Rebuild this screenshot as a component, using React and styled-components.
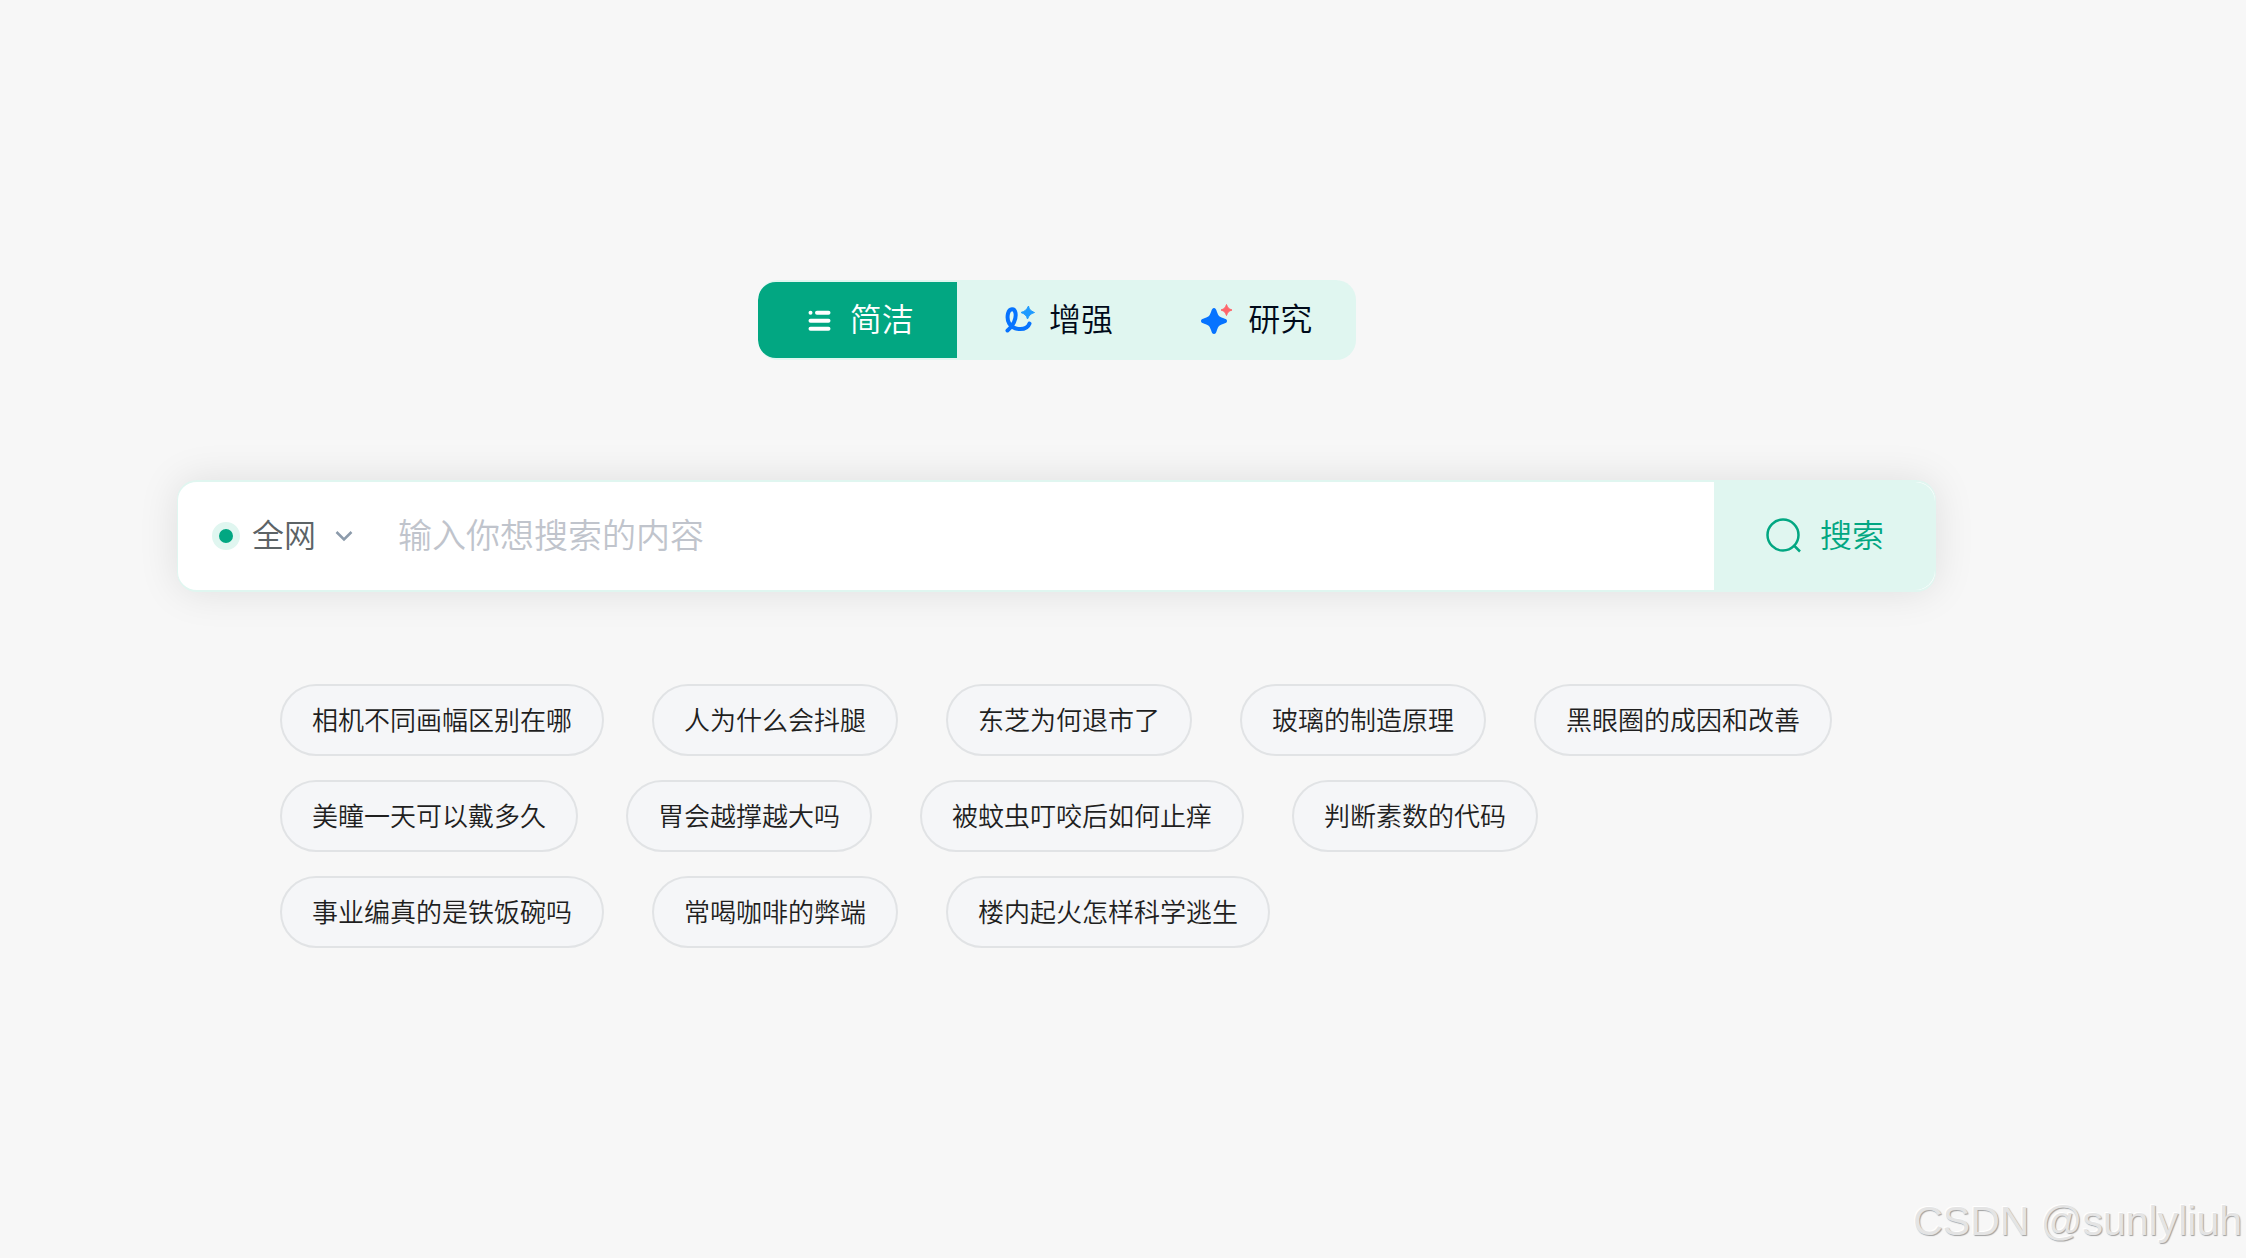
import React, { useState } from 'react';
import styled, { createGlobalStyle } from 'styled-components';

//Styled Components
const GlobalStyle = createGlobalStyle`
    * {
        box-sizing: border-box;
    }

    body {
        margin: 0;
        background-color: #f7f7f7;
        font-family: "Noto Sans CJK SC", sans-serif;
        font-weight: 350;
    }

    button, input, select {
        font-family: inherit;
        font-weight: inherit;
    }
`;

const Page = styled.div`
    min-height: 100vh;
    display: flex;
    flex-direction: column;
`;

const Main = styled.main`
    flex: 1;
    display: flex;
    flex-direction: column;
    align-items: center;
    padding: 280px 310px 0 177px;
`;

const Tabs = styled.div`
    width: 598px;
    height: 80px;
    display: flex;
    padding: 2px 0;
    border-radius: 20px;
    background-color: #e0f6f0;
    overflow: hidden;
`;

const Tab = styled.button`
    flex: 1;
    display: flex;
    justify-content: center;
    align-items: center;
    gap: 14px;
    padding: 0 0 0 3px;
    border: none;
    border-radius: ${props => (props.$active ? '18px 0 0 18px' : '0')};
    background-color: ${props => (props.$active ? '#02a782' : 'transparent')};
    color: ${props => (props.$active ? 'white' : '#000a1a')};
    font-size: 32px;
    line-height: 48px;
    cursor: pointer;
`;

const ButtonText = styled.span`
    padding-bottom: 6px;
`;

const SearchForm = styled.form`
    width: 100%;
    height: 112px;
    display: flex;
    margin-top: 120px;
    border: solid #e0f6f0;
    border-width: 2px 1px;
    border-radius: 20px;
    background-color: white;
    box-shadow: 0 0 40px rgba(0, 0, 0, 0.1);
`;

const Scope = styled.label`
    display: flex;
    align-items: center;
    padding-left: 34px;
`;

const Dot = styled.span`
    width: 28px;
    height: 28px;
    border: 7px solid #e0f6f0;
    border-radius: 50%;
    background-color: #02a782;
`;

const ScopeSelect = styled.select`
    width: 94px;
    appearance: none;
    padding: 0 0 6px 12px;
    border: none;
    background: none;
    color: #5c6366;
    font-size: 32px;
    line-height: 48px;
`;

const SearchInput = styled.input`
    flex: 1;
    min-width: 0;
    padding: 0 0 6px 44px;
    border: none;
    outline: none;
    background: none;
    color: #1f1f1f;
    font-size: 34px;
    &::placeholder {
        color: #c0c4cc;
        opacity: 1;
    }
`;

const SearchButton = styled.button`
    width: 221px;
    display: flex;
    justify-content: center;
    align-items: center;
    gap: 18px;
    padding: 0 0 0 1px;
    border: none;
    border-radius: 0 20px 20px 0;
    background-color: #e0f6f0;
    color: #02a782;
    font-size: 32px;
    line-height: 48px;
    cursor: pointer;
`;

const TagList = styled.div`
    width: 100%;
    display: flex;
    flex-wrap: wrap;
    gap: 24px 48px;
    margin-top: 92px;
    padding: 0 103px;
`;

const Tag = styled.button`
    height: 72px;
    padding: 0 30px 3px;
    border: 2px solid #e1e3e5;
    border-radius: 36px;
    background-color: #f5f6f8;
    color: #1f1f1f;
    font-size: 26px;
    line-height: 40px;
    white-space: nowrap;
    cursor: pointer;
`;

const Watermark = styled.footer`
    padding: 0 4px 13px 0;
    text-align: right;
    color: #e4e4e4;
    font-family: "Liberation Sans", Arial, sans-serif;
    font-size: 41px;
    line-height: 48px;
    text-shadow: 1px 1px 1px #a0a0a0, -1px -1px 1px white;
`;
//end Styled Components

const ListIcon = () => (
    <svg width="32" height="32" viewBox="0 0 32 32" fill="none" stroke="currentColor" strokeWidth="4" strokeLinecap="round">
        <path d="M6.500 8.700h.01M13 8.700h11.500M6.500 16.700h18M6.500 24.700h18" />
    </svg>
);

const EnhanceIcon = () => (
    <svg width="32" height="32" viewBox="0 0 32 32" fill="none" overflow="visible">
        <path
            d="M4.500 26.500C10 22 13.500 15 12.500 9C11.500 3.800 6.500 4 5 9.500C3.500 16 6 24 15.500 25C21 25.500 25 23.500 26.500 19.500"
            stroke="#0673ff"
            strokeWidth="4"
            strokeLinecap="round"
        />
        <path d="M25.500 2c.8 3.500 2 4.800 6 6.500c-3.800 1.200-5.200 2.500-7 6.500c-1-3.500-2.500-5-6.500-6.500c4-1.200 5.500-2.500 7.500-6.500z" fill="#1e9bff" stroke="#1e9bff" strokeLinejoin="round" />
    </svg>
);

const ResearchIcon = () => (
    <svg width="32" height="32" viewBox="1 0 32 32" fill="none" overflow="visible">
        <path d="M13 4c1.500 0 2 1 3 4c1.500 4 2 4.500 6 6c3 1 4 1.500 4 3s-1 2-4 3c-4 1.500-4.500 2-6 6c-1 3-1.500 4-3 4s-2-1-3-4c-1.500-4-2-4.500-6-6c-3-1-4-1.500-4-3s1-2 4-3c4-1.500 4.500-2 6-6c1-3 1.500-4 3-4z" fill="#0673ff" />
        <path d="M25.500 .5c1.500 3.800 1.700 4 5.500 5.500c-3.800 1.500-4 1.700-5.500 5.500c-1.500-3.800-1.700-4-5.500-5.500c3.800-1.500 4-1.700 5.500-5.500z" fill="#ff666b" stroke="#ff666b" strokeLinejoin="round" />
    </svg>
);

const ChevronIcon = () => (
    <svg width="20" height="20" viewBox="0 0 20 20" fill="none" stroke="#8c9bab" strokeWidth="2.500">
        <path d="M2.500 6L10 13.500L17.500 6" />
    </svg>
);

const SearchIcon = () => (
    <svg width="36" height="36" viewBox="0 0 36 36" fill="none" stroke="currentColor" strokeWidth="2.500">
        <circle cx="17" cy="17" r="15.500" />
        <path d="M27.500 27L34 33.500" />
    </svg>
);

const modes = [
    { name: '简洁', Icon: ListIcon },
    { name: '增强', Icon: EnhanceIcon },
    { name: '研究', Icon: ResearchIcon },
];

const questions = [
    '相机不同画幅区别在哪',
    '人为什么会抖腿',
    '东芝为何退市了',
    '玻璃的制造原理',
    '黑眼圈的成因和改善',
    '美瞳一天可以戴多久',
    '胃会越撑越大吗',
    '被蚊虫叮咬后如何止痒',
    '判断素数的代码',
    '事业编真的是铁饭碗吗',
    '常喝咖啡的弊端',
    '楼内起火怎样科学逃生',
];

const App = () => {
    const [mode, setMode] = useState('简洁');
    const [searchText, setSearchText] = useState('');

    return (
        <Page>
            <GlobalStyle />
            <Main>
                <Tabs>
                    {modes.map(({ name, Icon }) => (
                        <Tab key={name} type="button" $active={mode === name} onClick={() => setMode(name)}>
                            <Icon />
                            <ButtonText>{name}</ButtonText>
                        </Tab>
                    ))}
                </Tabs>
                <SearchForm onSubmit={e => e.preventDefault()}>
                    <Scope>
                        <Dot />
                        <ScopeSelect aria-label="搜索范围">
                            <option>全网</option>
                        </ScopeSelect>
                        <ChevronIcon />
                    </Scope>
                    <SearchInput
                        type="text"
                        aria-label="搜索内容"
                        placeholder="输入你想搜索的内容"
                        value={searchText}
                        onChange={e => setSearchText(e.target.value)}
                    />
                    <SearchButton type="submit">
                        <SearchIcon />
                        <ButtonText>搜索</ButtonText>
                    </SearchButton>
                </SearchForm>
                <TagList>
                    {questions.map(question => (
                        <Tag key={question} type="button" onClick={() => setSearchText(question)}>
                            {question}
                        </Tag>
                    ))}
                </TagList>
            </Main>
            <Watermark>CSDN @sunlyliuh</Watermark>
        </Page>
    );
}

export default App;
